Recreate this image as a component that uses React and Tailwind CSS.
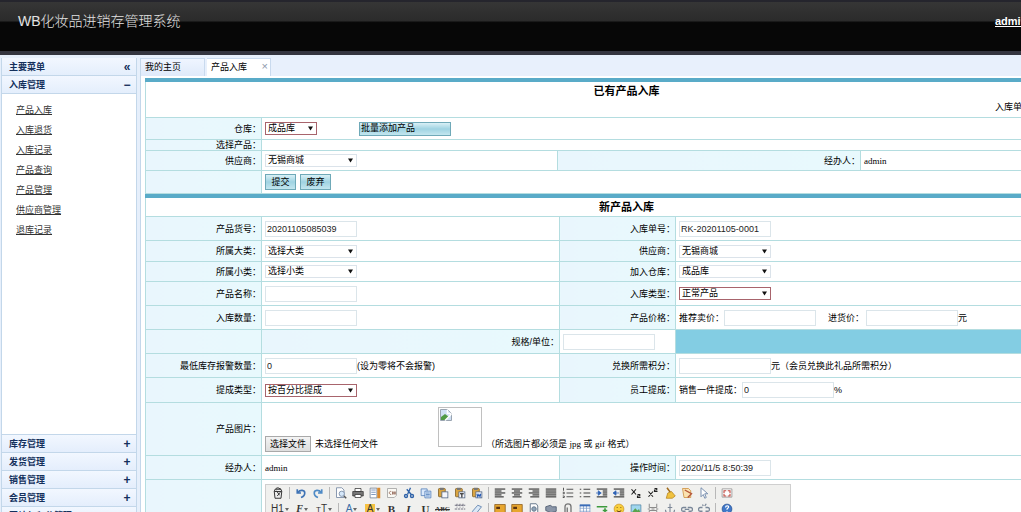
import React, { useState } from 'react';
import clsx from 'clsx';

const menuLinks = ['产品入库', '入库退货', '入库记录', '产品查询', '产品管理', '供应商管理', '退库记录'];
const closedPanels = ['库存管理', '发货管理', '销售管理', '会员管理', '网站与积分管理'];

/* ---------- form controls ---------- */

function Select({ label, options, required, small }) {
  return (
    <span className={clsx('relative inline-block align-middle', small ? 'w-[52px]' : 'w-[92px]')}>
      <select
        aria-label={label}
        className={clsx(
          'block h-[13px] w-full appearance-none border bg-white pl-[2px] text-[9px] leading-[11px] text-black outline-none',
          required ? 'border-[#a8646c]' : 'border-[#dbe3ea]'
        )}
      >
        {options.map((o) => (
          <option key={o}>{o}</option>
        ))}
      </select>
      <svg viewBox="0 0 6 5" className="pointer-events-none absolute top-1 right-1 h-[5px] w-[5px]">
        <path d="M0 0h6L3 5z" fill="#111" />
      </svg>
    </span>
  );
}

function TextInput({ label, value = '' }) {
  return (
    <input
      type="text"
      aria-label={label}
      defaultValue={value}
      className="h-4 w-[92px] border border-[#dbe5ea] bg-white px-px align-middle text-[9px] text-[#222] outline-none"
    />
  );
}

function ActionButton({ children, wide }) {
  return (
    <button
      type="button"
      className={clsx(
        'border border-[#6fa9b8] bg-linear-to-b from-[#d9f0f6] via-[#9fd3e2] to-[#c3e6ef] text-[9px] text-black',
        wide ? 'h-[14px] w-[92px] pl-px text-left leading-[11px]' : 'h-4 w-[31px] text-center leading-[13px]'
      )}
    >
      {children}
    </button>
  );
}

function Label({ children, colSpan }) {
  return (
    <th
      scope="row"
      colSpan={colSpan}
      className="border border-[#b4dde0] bg-linear-to-r from-[#e9f6fd] to-[#e8f9fd] text-right font-normal whitespace-nowrap"
    >
      {children}
    </th>
  );
}

function Cell({ children, colSpan, className }) {
  return (
    <td colSpan={colSpan} className={clsx('border border-[#b4dde0] pl-[3px] whitespace-nowrap', className)}>
      {children}
    </td>
  );
}

/* ---------- editor toolbar ---------- */

function Lines({ rows, extra }) {
  return (
    <g>
      {rows.map(([x, w], i) => (
        <rect key={i} x={x} y={2 + i * 2.6} width={w} height="1.5" fill="#333" />
      ))}
      {extra}
    </g>
  );
}

const pasteBase = (
  <g>
    <rect x="2" y="2" width="9" height="11" rx="1" fill="#d9a441" stroke="#7a5a20" />
    <rect x="4" y="1" width="5" height="3" fill="#777" />
    <rect x="6.500" y="6.500" width="8" height="8" fill="#f4f6fb" stroke="#4a5f80" />
  </g>
);

const iconArt = {
  source: <path d="M4 3h8l1 3-1 9H4L3 6zM3 6h10M6 5l4 6M7 12l4-5M5 2l3-1 4 2" fill="#eee" stroke="#333" strokeWidth="1.3" />,
  undo: <path d="M3 3v5h5M4 7c3-4 9-3 9 1 0 3-2 5-5 6" fill="none" stroke="#3f73b5" strokeWidth="2.2" />,
  redo: <path d="M13 3v5H8M12 7C9 3 3 4 3 8c0 3 2 5 5 6" fill="none" stroke="#4e8ac6" strokeWidth="2.2" />,
  preview: (
    <g fill="#fff" stroke="#7d8fa8" strokeWidth="1.2">
      <path d="M2 1h7l3 3v10H2z" />
      <circle cx="9" cy="9" r="3.500" fill="#d6e8fa" />
      <path d="M12 12l3 3" stroke="#555" strokeWidth="2" />
    </g>
  ),
  print: (
    <g stroke="#333">
      <path d="M4 2h8v4H4z" fill="#fff" />
      <path d="M1 6h14v6H1z" fill="#777" />
      <path d="M4 10h8v4H4z" fill="#fff" />
    </g>
  ),
  template: (
    <g>
      <path d="M1.500 1.500h9v13h-9z" fill="#fff" stroke="#68788e" />
      <path d="M3 4h6M3 7h6M3 10h6" stroke="#5577aa" />
      <path d="M11 1h4v14h-4z" fill="#d98a2b" />
    </g>
  ),
  code: (
    <g fill="none" stroke="#999">
      <path d="M2 2h12v9l-3 3H2z" fill="#fbfaf5" />
      <path d="M7 6c-3-1-4 4 0 4M9 6v4M12 6v4M8 7h5M8 9h5" stroke="#8a5a4a" />
    </g>
  ),
  cut: (
    <g fill="none" stroke="#2f62a8" strokeWidth="1.800">
      <path d="M10 1L6 10M5 3l6 7" />
      <circle cx="4" cy="12" r="2" />
      <circle cx="12" cy="12" r="2" />
    </g>
  ),
  copy: (
    <g fill="#dbe9fb" stroke="#4a78b5">
      <path d="M1.500 2.500h8v9h-8z" />
      <path d="M6.500 5.500h8v9h-8z" />
      <path d="M8 8h5M8 10h5M8 12h5" />
    </g>
  ),
  paste: pasteBase,
  pasteText: (
    <g>
      {pasteBase}
      <path d="M8 9h5M10.500 9v5" stroke="#111" strokeWidth="1.400" />
    </g>
  ),
  pasteWord: (
    <g>
      {pasteBase}
      <path d="M8 9l1 4 1.500-3 1.500 3 1-4" fill="none" stroke="#2458b0" strokeWidth="1.400" />
    </g>
  ),
  left: <Lines rows={[[1, 14], [1, 9], [1, 14], [1, 9], [1, 12]]} />,
  center: <Lines rows={[[1, 14], [4, 8], [1, 14], [4, 8], [2, 12]]} />,
  right: <Lines rows={[[1, 14], [6, 9], [1, 14], [6, 9], [3, 12]]} />,
  justify: <Lines rows={[[1, 14], [1, 14], [1, 14], [1, 14], [1, 14]]} />,
  ol: <path d="M6 3h9M6 8h9M6 13h9M2 1v4M1 7h2v2H1M1 12h2v2H1" fill="none" stroke="#444" strokeWidth="1.200" />,
  ul: <path d="M6 3h9M6 8h9M6 13h9M1 3h2M1 8h2M1 13h2" fill="none" stroke="#444" strokeWidth="1.400" />,
  indent: (
    <Lines rows={[[1, 14], [9, 6], [9, 6], [9, 6], [1, 14]]} extra={<path d="M0 8h4M3 5l4 3-4 3z" fill="#2d62b5" stroke="#2d62b5" />} />
  ),
  outdent: (
    <Lines rows={[[1, 14], [9, 6], [9, 6], [9, 6], [1, 14]]} extra={<path d="M3 8h5M4 5L0 8l4 3z" fill="#2d62b5" stroke="#2d62b5" />} />
  ),
  sub: <path d="M2 3l6 7M8 3l-6 7M10 10h3v2h-3v2h4" fill="none" stroke="#222" strokeWidth="1.500" />,
  sup: <path d="M2 6l6 7M8 6l-6 7M10 2h3v2h-3v2h4" fill="none" stroke="#222" strokeWidth="1.500" />,
  broom: (
    <g>
      <path d="M4 1l5 7" stroke="#a06a1c" strokeWidth="2" />
      <path d="M5 8l5-2 5 6-4 3H3z" fill="#f0c240" stroke="#b5831f" />
    </g>
  ),
  format: (
    <g>
      <path d="M2 2h8l3 3v9H4z" fill="#fbe2b0" stroke="#c98a35" />
      <path d="M5 4l9 5-5 5" fill="none" stroke="#b5563a" strokeWidth="1.800" />
    </g>
  ),
  select: <path d="M4 1v12l3-3 2 5 2-1-2-5h4z" fill="#fff" stroke="#6d86a8" strokeWidth="1.200" />,
  fullscreen: (
    <g fill="none">
      <path d="M1.500 2.500h13v11h-13z" fill="#fff" stroke="#8a8a8a" />
      <path d="M4 8V5h3M9 5h3v3M12 9v3H9M7 12H4V9" stroke="#c0483f" strokeWidth="1.500" />
    </g>
  ),
  strikeLines: <path d="M1 3h14M1 8h14M1 13h14M4 1v5M8 1v5M12 1v5" stroke="#667" strokeWidth="1.200" strokeDasharray="3 1" />,
  eraser: <path d="M2 11l7-8 5 2-7 9H3z" fill="#dbe8f6" stroke="#6d8db5" strokeWidth="1.300" />,
  image: (
    <g>
      <path d="M1 2h14v12H1z" fill="#e7a62e" stroke="#8a5a18" />
      <path d="M3 5h5v3H3z" fill="#5a3210" />
    </g>
  ),
  flash: (
    <g fill="none" stroke="#68798c" strokeWidth="1.300">
      <path d="M3 1h8l2 3v11H3z" fill="#fff" />
      <circle cx="8" cy="8" r="3" fill="#8ea3b8" />
    </g>
  ),
  media: <path d="M1 5l6-2 3 2h5v6l-7 2-7-3z" fill="#8b96a8" stroke="#435066" />,
  file: <path d="M4 14V5c0-5 8-5 8 0v8c0 3-5 3-5 0V6" fill="none" stroke="#777" strokeWidth="1.800" />,
  table: (
    <g>
      <path d="M1.500 2.500h13v12h-13zM1 7h14M1 11h14M6 3v11M10 3v11" fill="#fff" stroke="#7d9cc8" />
      <path d="M1 2h14v2.500H1z" fill="#3b6db8" />
    </g>
  ),
  hr: <path d="M1 5h14M9 10h6M12 7v6" stroke="#3d9a3d" strokeWidth="2.200" />,
  smile: (
    <g>
      <circle cx="8" cy="8" r="6.500" fill="#f8cf3c" stroke="#cf9420" />
      <path d="M5 6h1M10 6h1M5 10c2 2 4 2 6 0" fill="none" stroke="#6b4510" strokeWidth="1.400" />
    </g>
  ),
  map: (
    <g>
      <path d="M1.500 2.500h13v11h-13z" fill="#9fd6ee" stroke="#5286a5" />
      <path d="M2 13l5-6 3 3 2-2 2 5z" fill="#59a34c" />
    </g>
  ),
  pagebreak: <path d="M3 1v5h10V1M1 8h3M6 8h4M12 8h3M3 15v-5h10v5" fill="none" stroke="#888" strokeWidth="1.300" />,
  anchor: <path d="M8 3v11M5 6h6M2 9c0 7 12 7 12 0M8 1v2" fill="none" stroke="#7e8898" strokeWidth="1.500" />,
  link: <path d="M7 6H3c-3 0-3 5 0 5h3M9 6h4c3 0 3 5 0 5h-3M5 8.500h6" fill="none" stroke="#7a8799" strokeWidth="1.700" />,
  unlink: <path d="M6 6H3c-3 0-3 5 0 5h3M10 6h3c3 0 3 5 0 5h-3M6 2l1 2M11 1l-2 3" fill="none" stroke="#7a8799" strokeWidth="1.700" />,
  about: (
    <g>
      <circle cx="8" cy="8" r="6.500" fill="#3f78c9" stroke="#244f94" />
      <path d="M6 6c0-3 5-3 4 0l-2 2v1M8 11v1" fill="none" stroke="#fff" strokeWidth="1.500" />
    </g>
  ),
};

function Tool({ name }) {
  return (
    <button type="button" aria-label={name} className="flex h-4 w-[17px] items-center justify-center">
      <svg viewBox="0 0 16 16" className="h-3 w-3">{iconArt[name]}</svg>
    </button>
  );
}

function Divider() {
  return <span className="flex h-3 w-[6px] justify-center"><span className="w-px bg-[#b8b8b8]" /></span>;
}

function DropTool({ children, narrow }) {
  return (
    <button type="button" className={clsx('flex h-4 items-center justify-center text-[10px] leading-none', narrow ? 'w-[21px]' : 'w-[22px]')}>
      {children}
      <svg viewBox="0 0 4 3" className="ml-px h-[3px] w-1"><path d="M0 0h4L2 3z" fill="#666" /></svg>
    </button>
  );
}

function LetterTool({ children, className }) {
  return (
    <button type="button" className={clsx('h-4 w-[17px] text-center font-["Liberation_Serif",serif] font-bold leading-4', className)}>
      {children}
    </button>
  );
}

function Editor() {
  return (
    <div className="w-[526px] border border-[#cfcfcf] bg-[#f0f0ee] px-[3px] text-[#333]">
      <div className="flex items-center">
        <Tool name="source" />
        <Divider />
        {['undo', 'redo'].map((n) => <Tool key={n} name={n} />)}
        <Divider />
        {['preview', 'print', 'template', 'code', 'cut', 'copy', 'paste', 'pasteText', 'pasteWord'].map((n) => <Tool key={n} name={n} />)}
        <Divider />
        {['left', 'center', 'right', 'justify', 'ol', 'ul', 'indent', 'outdent', 'sub', 'sup', 'broom', 'format', 'select'].map((n) => (
          <Tool key={n} name={n} />
        ))}
        <Divider />
        <Tool name="fullscreen" />
      </div>
      <div className="flex items-center">
        <DropTool>H1</DropTool>
        <DropTool><i className="font-['Liberation_Serif',serif] font-bold">F</i></DropTool>
        <DropTool><span><small className="text-[8px]">T</small>T</span></DropTool>
        <Divider />
        <DropTool narrow><span className="text-[#3a6ea8]">A</span></DropTool>
        <DropTool narrow><span className="bg-[#f5c242] px-[2px]">A</span></DropTool>
        <LetterTool className="text-[11px]">B</LetterTool>
        <LetterTool className="text-[11px] italic">I</LetterTool>
        <LetterTool className="text-[11px] underline">U</LetterTool>
        <LetterTool className="text-[7px] line-through">ABC</LetterTool>
        <Tool name="strikeLines" />
        <Tool name="eraser" />
        <Divider />
        <Tool name="image" />
        {['image', 'flash', 'media', 'file', 'table', 'hr', 'smile', 'map', 'pagebreak', 'anchor', 'link', 'unlink'].map((n) => (
          <Tool key={n} name={n} />
        ))}
        <Divider />
        <Tool name="about" />
      </div>
      <div className="h-40 border-t border-[#cfcfcf] bg-white" />
    </div>
  );
}

/* ---------- side menu ---------- */

function PanelHeader({ title, sign }) {
  return (
    <button
      type="button"
      className="flex h-[18px] w-full shrink-0 items-center justify-between border-b border-[#c3d7ea] bg-linear-to-b from-[#f2f7ff] to-[#e4eefc] pr-[5px] pl-[7px] text-[9px] font-bold text-[#14305c]"
    >
      <span>{title}</span>
      <span className="w-2 text-center text-[12px] leading-none">{sign}</span>
    </button>
  );
}

function Sidebar() {
  return (
    <aside className="flex w-[136px] shrink-0 flex-col border-x border-[#c3d7ea] bg-white">
      <PanelHeader title="主要菜单" sign="«" />
      <PanelHeader title="入库管理" sign="−" />
      <nav className="min-h-[341px] border-b border-[#c3d7ea] pt-[6px] pl-[14px]">
        {menuLinks.map((m) => (
          <a key={m} href="#" className="block text-[9px] leading-5 text-[#333] underline">{m}</a>
        ))}
      </nav>
      {closedPanels.map((p) => <PanelHeader key={p} title={p} sign="+" />)}
    </aside>
  );
}

/* ---------- content ---------- */

function ExistingProduct() {
  return (
    <section className="border-t-4 border-[#59abc8]">
      <div className="h-[35px] border-l border-[#b4dde0]">
        <h2 className="text-center text-[11px] leading-[18px] font-bold">已有产品入库</h2>
        <p className="flex justify-end leading-[14px]"><span className="w-28">入库单号：</span></p>
      </div>
      <table className="w-full table-fixed border-collapse">
        <colgroup>
          <col className="w-[116px]" />
          <col className="w-[296px]" />
          <col className="w-[303px]" />
          <col />
        </colgroup>
        <tbody>
          <tr className="h-[22px]">
            <Label>仓库：</Label>
            <Cell colSpan={3}>
              <div className="flex items-center gap-[42px]">
                <Select label="仓库" options={['成品库']} required small />
                <ActionButton wide>批量添加产品</ActionButton>
              </div>
            </Cell>
          </tr>
          <tr className="h-[11px]">
            <Label>选择产品：</Label>
            <Cell colSpan={3} />
          </tr>
          <tr className="h-5">
            <Label>供应商：</Label>
            <Cell><Select label="供应商" options={['无锡商城']} /></Cell>
            <Label>经办人：</Label>
            <Cell><span className="font-['Liberation_Serif',serif]">admin</span></Cell>
          </tr>
          <tr className="h-[23px]">
            <Label />
            <Cell colSpan={3}>
              <div className="flex gap-1">
                <ActionButton>提交</ActionButton>
                <ActionButton>废弃</ActionButton>
              </div>
            </Cell>
          </tr>
        </tbody>
      </table>
    </section>
  );
}

function NewProduct() {
  return (
    <section className="border-t-4 border-[#59abc8]">
      <h2 className="border-l border-[#b4dde0] text-center text-[11px] leading-[18px] font-bold">新产品入库</h2>
      <table className="w-full table-fixed border-collapse">
        <colgroup>
          <col className="w-[116px]" />
          <col className="w-[298px]" />
          <col className="w-[116px]" />
          <col />
        </colgroup>
        <tbody>
          <tr className="h-6">
            <Label>产品货号：</Label>
            <Cell><TextInput label="产品货号" value="20201105085039" /></Cell>
            <Label>入库单号：</Label>
            <Cell><TextInput label="入库单号" value="RK-20201105-0001" /></Cell>
          </tr>
          <tr className="h-[21px]">
            <Label>所属大类：</Label>
            <Cell><Select label="所属大类" options={['选择大类']} /></Cell>
            <Label>供应商：</Label>
            <Cell><Select label="供应商" options={['无锡商城']} /></Cell>
          </tr>
          <tr className="h-5">
            <Label>所属小类：</Label>
            <Cell><Select label="所属小类" options={['选择小类']} /></Cell>
            <Label>加入仓库：</Label>
            <Cell><Select label="加入仓库" options={['成品库']} /></Cell>
          </tr>
          <tr className="h-6">
            <Label>产品名称：</Label>
            <Cell><TextInput label="产品名称" /></Cell>
            <Label>入库类型：</Label>
            <Cell><Select label="入库类型" options={['正常产品']} required /></Cell>
          </tr>
          <tr className="h-6">
            <Label>入库数量：</Label>
            <Cell><TextInput label="入库数量" /></Cell>
            <Label>产品价格：</Label>
            <Cell>
              <div className="flex items-center">
                推荐卖价：
                <TextInput label="推荐卖价" />
                <span className="w-[38px] pl-3 whitespace-nowrap">进货价：</span>
                <span className="pl-3"><TextInput label="进货价" /></span>
                元
              </div>
            </Cell>
          </tr>
          <tr className="h-6">
            <Label />
            <Label>规格/单位：</Label>
            <Cell><TextInput label="规格/单位" /></Cell>
            <Cell className="bg-[#83cde3]" />
          </tr>
          <tr className="h-6">
            <Label>最低库存报警数量：</Label>
            <Cell>
              <TextInput label="最低库存报警数量" value="0" />
              <span className="align-middle">(设为零将不会报警)</span>
            </Cell>
            <Label>兑换所需积分：</Label>
            <Cell>
              <TextInput label="兑换所需积分" />
              <span className="align-middle">元（会员兑换此礼品所需积分）</span>
            </Cell>
          </tr>
          <tr className="h-[25px]">
            <Label>提成类型：</Label>
            <Cell><Select label="提成类型" options={['按百分比提成']} required /></Cell>
            <Label>员工提成：</Label>
            <Cell>
              <span className="align-middle">销售一件提成：</span>
              <TextInput label="销售一件提成" value="0" />
              <span className="align-middle">%</span>
            </Cell>
          </tr>
          <tr className="h-[53px]">
            <Label>产品图片：</Label>
            <Cell colSpan={3}>
              <div className="flex items-end">
                <label className="flex w-[173px] items-center gap-1">
                  <input type="file" className="sr-only" />
                  <span className="flex h-4 w-[46px] items-center justify-center border border-[#a9a9a9] bg-linear-to-b from-[#f4f4f4] to-[#dedede]">
                    选择文件
                  </span>
                  未选择任何文件
                </label>
                <div role="img" aria-label="产品图片" className="mb-[5px] h-10 w-11 border border-[#c0c0c0] p-px">
                  <svg viewBox="0 0 12 12" className="h-3 w-3">
                    <path d="M.5.5h7l4 4v7H.5z" fill="#cfe0f5" stroke="#9aa5b1" />
                    <path d="M1 11V8l4-3 4 3-3 3z" fill="#4f9a45" />
                    <path d="M7.500.5v4h4M11.500 5L5 11.500" fill="none" stroke="#fff" strokeWidth="1.500" />
                  </svg>
                </div>
                <span className="pb-[3px] pl-1">
                  （所选图片都必须是 <span className="font-['Liberation_Serif',serif]">jpg</span> 或{' '}
                  <span className="font-['Liberation_Serif',serif]">gif</span> 格式）
                </span>
              </div>
            </Cell>
          </tr>
          <tr className="h-6">
            <Label>经办人：</Label>
            <Cell><span className="font-['Liberation_Serif',serif]">admin</span></Cell>
            <Label>操作时间：</Label>
            <Cell><TextInput label="操作时间" value="2020/11/5 8:50:39" /></Cell>
          </tr>
          <tr>
            <Label />
            <Cell colSpan={3} className="pt-1"><Editor /></Cell>
          </tr>
        </tbody>
      </table>
    </section>
  );
}

export default function App() {
  const [tab, setTab] = useState('产品入库');

  return (
    <div className="flex h-screen flex-col overflow-hidden bg-[#e6effb] font-['Liberation_Sans','Noto_Sans_CJK_SC',sans-serif] text-[9px] leading-[10px] text-black">
      <header className="flex h-[55px] shrink-0 border-t-2 border-b-4 border-t-[#25252d] border-b-[#34353f] bg-linear-to-b from-[#363636] from-0% via-[#2b2b2b] via-38% to-[#070707] to-42%">
        <div className="flex w-full min-w-[1090px] shrink-0 justify-between px-[18px] pt-[9px]">
          <h1 className="text-[14px] leading-5 font-light text-[#e2e2e2]">WB化妆品进销存管理系统</h1>
          <a href="#" className="w-[77px] text-[11px] leading-5 font-bold text-white underline">admin</a>
        </div>
      </header>

      <div className="flex min-h-0 flex-1 gap-[3px] pt-[3px] pl-px">
        <Sidebar />
        <main className="min-w-0 flex-1 overflow-hidden border-l border-[#c3d7ea] bg-white">
          <div role="tablist" className="flex h-[18px] gap-[2px] bg-[#e8f0fc]">
            {['我的主页', '产品入库'].map((t) => (
              <button
                key={t}
                role="tab"
                type="button"
                aria-selected={tab === t}
                onClick={() => setTab(t)}
                className={clsx(
                  'flex h-full w-16 justify-between border-t border-r border-[#c9daee] pr-[2px] pl-1',
                  tab === t ? 'bg-white' : 'bg-linear-to-b from-[#eff5ff] to-[#dfeafa]'
                )}
              >
                <span className="leading-[17px]">{t}</span>
                {t === '产品入库' && <span className="text-[11px] leading-[14px] text-[#8d9aab]">×</span>}
              </button>
            ))}
          </div>
          <div className="min-w-[966px] pt-[2px] pl-1">
            <ExistingProduct />
            <NewProduct />
          </div>
        </main>
      </div>
    </div>
  );
}
